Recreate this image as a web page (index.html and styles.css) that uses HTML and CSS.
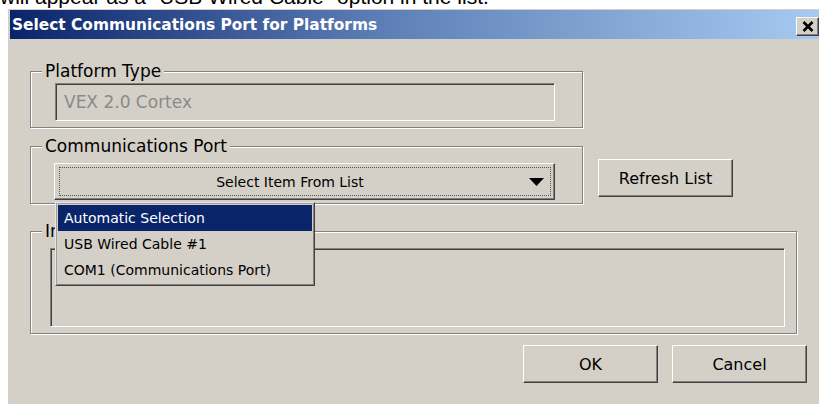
FILE: index.html
```html
<!DOCTYPE html>
<html lang="en">
<head>
<meta charset="utf-8">
<title>Select Communications Port for Platforms</title>
<link rel="stylesheet" href="styles.css">
</head>
<body>
  <div class="snippet"><p>will appear as a "USB Wired Cable" option in the list.</p></div>

  <div class="dialog">
    <div class="titlebar">
      <span class="title">Select Communications Port for Platforms</span>
      <button class="close" aria-label="Close">
        <svg width="12" height="11" viewBox="0 0 12 11"><path d="M1.5 1 L10.5 10 M10.5 1 L1.5 10" stroke="#000" stroke-width="2.6" fill="none"/></svg>
      </button>
    </div>

    <div class="content">
      <fieldset class="group group-platform">
        <legend>Platform Type</legend>
        <div class="field field-disabled">VEX 2.0 Cortex</div>
      </fieldset>

      <div class="port-row">
        <fieldset class="group group-port">
          <legend>Communications Port</legend>
          <div class="combo-wrap">
            <div class="combo">
              <span class="combo-focus">
                <span class="combo-text">Select Item From List</span>
                <svg class="combo-arrow" width="15" height="8" viewBox="0 0 15 8"><polygon points="0,0 15,0 7.5,8" fill="#000"/></svg>
              </span>
            </div>
            <ul class="combo-list">
              <li class="selected">Automatic Selection</li>
              <li>USB Wired Cable #1</li>
              <li>COM1 (Communications Port)</li>
            </ul>
          </div>
        </fieldset>
        <button class="btn btn-refresh">Refresh List</button>
      </div>

      <fieldset class="group group-info">
        <legend>Information</legend>
        <div class="field info-box"></div>
      </fieldset>

      <div class="actions">
        <button class="btn">OK</button>
        <button class="btn">Cancel</button>
      </div>
    </div>
  </div>
</body>
</html>
```

FILE: styles.css
```css
html, body {
  margin: 0;
  padding: 0;
}

body {
  width: 819px;
  height: 404px;
  overflow: hidden;
  background: #fff;
  font-family: "DejaVu Sans", sans-serif;
  color: #000;
}

/* text of the page behind the dialog */
.snippet {
  height: 9px;
  overflow: hidden;
}

.snippet p {
  margin: -15px 0 0 0;
  font: 21px/24px "Liberation Sans", Arial, sans-serif;
  white-space: nowrap;
}

/* window frame */
.dialog {
  margin-left: 7px;
  width: 813px;
  height: 395px;
  box-sizing: border-box;
  background: #d4d0c8;
  border-top: 1px solid #d4d0c8;
  border-left: 1px solid #fff;
}

.titlebar {
  display: flex;
  align-items: center;
  height: 29px;
  margin-left: 2px;
  padding-left: 2px;
  background: linear-gradient(to right, #0a246a 0%, #5b7db5 45%, #a6caf0 100%);
}

.title {
  flex: 1;
  color: #fff;
  font: bold 15.4px/1 "DejaVu Sans", sans-serif;
  white-space: nowrap;
  padding-top: 2px;
}

.close {
  width: 23px;
  height: 19px;
  margin: 3px 1px 0 0;
  padding: 0;
  display: flex;
  align-items: center;
  justify-content: center;
  background: #d4d0c8;
  border: 1px solid;
  border-color: #fff #404040 #404040 #fff;
  box-shadow: inset -1px -1px 0 #808080;
}

.content {
  padding: 22px 0 0 22px;
}

/* etched group boxes */
.group {
  margin: 0;
  min-width: 0;
  box-sizing: border-box;
  border: 1px solid #808080;
  box-shadow: inset 1px 1px 0 #fff, 1px 1px 0 #fff;
}

.group legend {
  font-size: 17px;
  line-height: 20px;
  padding: 0 3px;
  background: #d4d0c8;
  white-space: nowrap;
}

.group-platform {
  width: 553px;
  padding: 2px 27px 6px 24px;
}

.group-platform legend {
  margin-left: -13px;
}

/* sunken edit box */
.field {
  box-sizing: border-box;
  border: 1px solid;
  border-color: #808080 #fff #fff #808080;
  box-shadow: inset 1px 1px 0 #404040;
}

.field-disabled {
  width: 500px;
  height: 38px;
  padding-left: 8px;
  font-size: 17px;
  line-height: 36px;
  color: #8a8a8a;
}

.port-row {
  display: flex;
  align-items: flex-start;
  margin-top: 8px;
}

.group-port {
  width: 553px;
  padding: 7px 0 3px 23px;
}

.group-port legend {
  margin-left: -12px;
}

.combo-wrap {
  position: relative;
  width: 501px;
}

.combo {
  display: flex;
  height: 37px;
  box-sizing: border-box;
  padding: 2px 2px 2px 3px;
  border: 1px solid;
  border-color: #fff #404040 #404040 #fff;
  box-shadow: inset -1px -1px 0 #808080;
}

.combo-focus {
  flex: 1;
  display: flex;
  align-items: center;
  margin: 1px;
  border: 1px dotted #555;
}

.combo-text {
  flex: 1;
  text-align: center;
  padding-right: 9px;
  font-size: 14px;
}

.combo-arrow {
  display: block;
  margin-right: 6px;
}

/* open dropdown list */
.combo-list {
  position: absolute;
  z-index: 5;
  top: calc(100% + 2px);
  left: 1px;
  width: 260px;
  margin: 0;
  padding: 2px;
  list-style: none;
  box-sizing: border-box;
  background: #d4d0c8;
  border: 1px solid;
  border-color: #e8e6e2 #404040 #404040 #e8e6e2;
  box-shadow: inset 1px 1px 0 #a0a0a0, inset -1px -1px 0 #808080;
}

.combo-list li {
  height: 26px;
  line-height: 26px;
  padding-left: 6px;
  font-size: 14px;
  white-space: nowrap;
}

.combo-list li.selected {
  background: #0a246a;
  color: #fff;
}

/* raised push buttons */
.btn {
  width: 135px;
  height: 38px;
  padding: 0;
  font-family: "DejaVu Sans", sans-serif;
  font-size: 16px;
  color: #000;
  background: #d4d0c8;
  border: 1px solid;
  border-color: #fff #404040 #404040 #fff;
  box-shadow: inset -1px -1px 0 #808080;
}

.btn-refresh {
  margin: 23px 0 0 15px;
}

.group-info {
  width: 767px;
  margin-top: 17px;
  padding: 7px 0 6px 19px;
}

.group-info legend {
  margin-left: -8px;
}

.info-box {
  width: 735px;
  height: 79px;
}

.actions {
  display: flex;
  gap: 14px;
  margin-top: 11px;
  padding-left: 493px;
}
```
